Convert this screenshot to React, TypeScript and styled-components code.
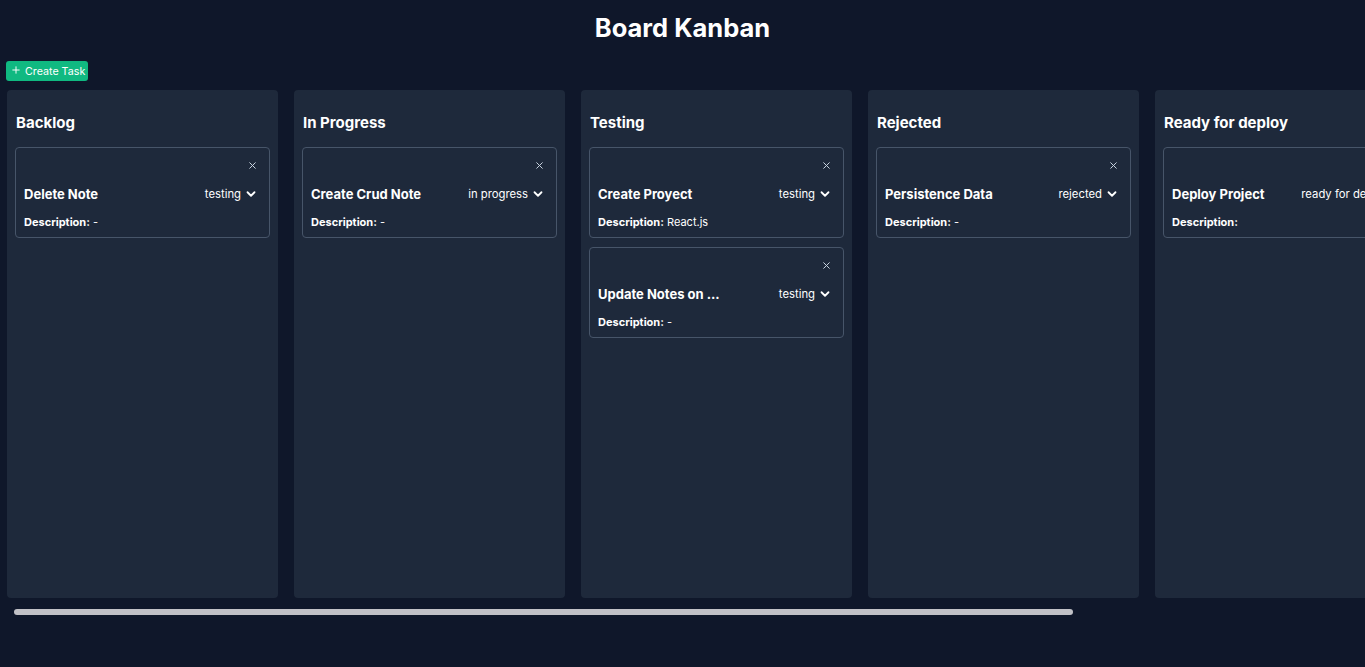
import styled, { createGlobalStyle } from "styled-components";

const GlobalStyle = createGlobalStyle`
  * {
    box-sizing: border-box;
  }
  body {
    margin: 0;
    background: #0f172a;
    color: #ffffff;
    font-family: Inter, "Noto Sans", Arial, sans-serif;
  }
`;

const COLUMN_WIDTH = 270.7;
const COLUMN_GAP = 16;
const VISIBLE_WIDTH = 1358;
const TRACK_WIDTH = 1342;

const Page = styled.main`
  min-height: 667px;
  overflow: hidden;
`;

const Title = styled.h1`
  margin: 12px 0 0;
  font-size: 25.5px;
  line-height: 32px;
  font-weight: 700;
  text-align: center;
`;

const Toolbar = styled.div`
  display: flex;
  margin-top: 17px;
  padding-left: 6px;
`;

const CreateButton = styled.button`
  display: flex;
  align-items: center;
  gap: 5px;
  height: 20px;
  padding: 0 3px 0 6px;
  border: none;
  border-radius: 3px;
  background: #10b981;
  color: #ffffff;
  font-family: inherit;
  font-size: 10.7px;
  cursor: pointer;

  svg {
    margin-top: -3px;
  }
`;

const Board = styled.div`
  display: flex;
  gap: ${COLUMN_GAP}px;
  width: ${VISIBLE_WIDTH}px;
  margin: 9px 0 0 7px;
  overflow: hidden;
`;

const Column = styled.section`
  flex: 0 0 ${COLUMN_WIDTH}px;
  height: 508px;
  padding: 21px 8px 8px;
  border-radius: 4px;
  background: #1e293b;
`;

const ColumnTitle = styled.h2`
  margin: 0 0 12px 1px;
  font-size: 15px;
  line-height: 24px;
  font-weight: 700;
`;

const CardList = styled.div`
  display: flex;
  flex-direction: column;
  gap: 9px;
`;

const Card = styled.article`
  width: 255px;
  flex-shrink: 0;
  padding: 10px 12px 7px 8px;
  border: 1px solid #475569;
  border-radius: 4px;
`;

const CloseRow = styled.div`
  display: flex;
  justify-content: flex-end;
  height: 16px;
`;

const CloseButton = styled.button`
  display: flex;
  align-items: center;
  justify-content: center;
  width: 16px;
  height: 16px;
  margin-right: -3px;
  margin-top: -1px;
  padding: 0;
  border: none;
  background: transparent;
  color: #cbd5e1;
  cursor: pointer;
`;

const TitleRow = styled.div`
  display: flex;
  align-items: center;
  justify-content: space-between;
  height: 20px;
  margin-top: 10px;
`;

const TaskName = styled.h3`
  margin: 0;
  font-size: 13px;
  font-weight: 700;
  white-space: nowrap;
`;

const StatusSelect = styled.button`
  display: flex;
  align-items: center;
  gap: 4px;
  padding: 0;
  border: none;
  background: transparent;
  color: #ffffff;
  font-family: inherit;
  font-size: 11.3px;
  white-space: nowrap;
  cursor: pointer;
`;

const Description = styled.p`
  margin: 10px 0 0;
  height: 16px;
  font-size: 11px;
  line-height: 16px;
  white-space: nowrap;

  strong {
    font-weight: 700;
  }
`;

const ScrollTrack = styled.div`
  width: ${TRACK_WIDTH}px;
  height: 6px;
  margin: 11px 0 0 14px;
`;

const ScrollThumb = styled.div`
  height: 100%;
  border-radius: 3px;
  background: #c1c1c6;
`;

type Task = {
  id: number;
  name: string;
  status: string;
  description?: string;
};

type ColumnData = {
  title: string;
  tasks: Task[];
};

const columns: ColumnData[] = [
  { title: "Backlog", tasks: [{ id: 1, name: "Delete Note", status: "testing", description: "-" }] },
  { title: "In Progress", tasks: [{ id: 2, name: "Create Crud Note", status: "in progress", description: "-" }] },
  {
    title: "Testing",
    tasks: [
      { id: 3, name: "Create Proyect", status: "testing", description: "React.js" },
      { id: 4, name: "Update Notes on ...", status: "testing", description: "-" },
    ],
  },
  { title: "Rejected", tasks: [{ id: 5, name: "Persistence Data", status: "rejected", description: "-" }] },
  { title: "Ready for deploy", tasks: [{ id: 6, name: "Deploy Project", status: "ready for deploy" }] },
  { title: "Done", tasks: [] },
];

const contentWidth = columns.length * COLUMN_WIDTH + (columns.length - 1) * COLUMN_GAP + COLUMN_GAP;
const thumbWidth = Math.round((TRACK_WIDTH * VISIBLE_WIDTH) / contentWidth);

const Chevron = () => (
  <svg width="12" height="12" viewBox="0 0 24 24" fill="none" stroke="currentColor" strokeWidth="3.6" strokeLinecap="round" strokeLinejoin="round">
    <path d="M5 8.5l7 7 7-7" />
  </svg>
);

const Cross = () => (
  <svg width="7" height="7" viewBox="0 0 10 10" stroke="currentColor" strokeWidth="1.4" strokeLinecap="round">
    <path d="M1 1l8 8M9 1l-8 8" />
  </svg>
);

const Plus = () => (
  <svg width="8" height="8" viewBox="0 0 10 10" stroke="currentColor" strokeWidth="1.2">
    <path d="M5 0.5v9M0.5 5h9" />
  </svg>
);

const TaskCard = ({ task }: { task: Task }) => (
  <Card>
    <CloseRow>
      <CloseButton aria-label="delete">
        <Cross />
      </CloseButton>
    </CloseRow>
    <TitleRow>
      <TaskName>{task.name}</TaskName>
      <StatusSelect>
        {task.status}
        <Chevron />
      </StatusSelect>
    </TitleRow>
    <Description>
      <strong>Description:</strong> {task.description}
    </Description>
  </Card>
);

const App = () => {
  return (
    <Page>
      <GlobalStyle />
      <Title>Board Kanban</Title>
      <Toolbar>
        <CreateButton>
          <Plus />
          Create Task
        </CreateButton>
      </Toolbar>
      <Board>
        {columns.map((column) => (
          <Column key={column.title}>
            <ColumnTitle>{column.title}</ColumnTitle>
            <CardList>
              {column.tasks.map((task) => (
                <TaskCard key={task.id} task={task} />
              ))}
            </CardList>
          </Column>
        ))}
      </Board>
      <ScrollTrack>
        <ScrollThumb style={{ width: thumbWidth }} />
      </ScrollTrack>
    </Page>
  );
};

export default App;
